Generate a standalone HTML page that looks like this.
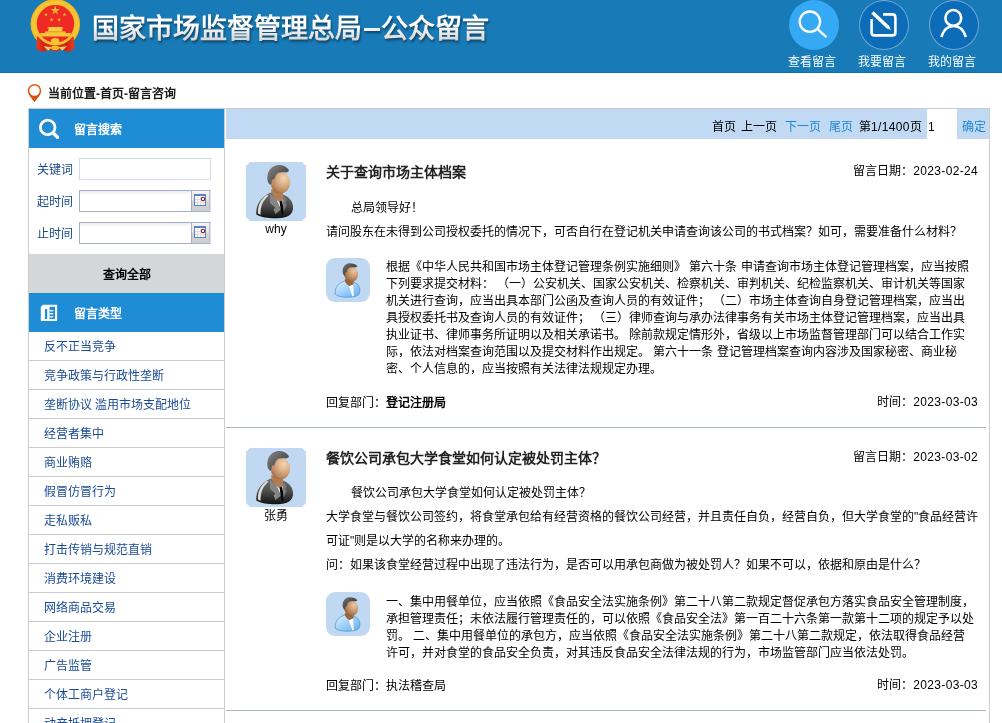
<!DOCTYPE html>
<html lang="zh-CN">
<head>
<meta charset="utf-8">
<title>公众留言</title>
<style>
*{box-sizing:border-box;margin:0;padding:0}
html,body{width:1002px;height:723px;overflow:hidden;background:#fff}
body{font-family:"Liberation Sans",sans-serif;font-size:12px;color:#000;position:relative}
.abs{position:absolute}
.t{position:absolute;white-space:nowrap;line-height:14px;height:14px}
#hdr{position:absolute;left:0;top:0;width:1002px;height:73px;background:#187ab7;border-bottom:1px solid #0a6fb6}
#title{position:absolute;left:92px;top:11.5px;font-size:27px;line-height:34px;height:34px;white-space:nowrap;font-weight:bold;letter-spacing:0;filter:drop-shadow(1px 2px 1px rgba(0,0,0,.45))}
#title span{color:#fff;background:linear-gradient(#fff 35%,#d4d4d4 90%);-webkit-background-clip:text;background-clip:text;-webkit-text-fill-color:transparent}
#title i{display:inline-block;width:16px;height:3px;margin:0 1.5px 0 1.5px;background:#f0f0f0;vertical-align:7px}
.nav{position:absolute;top:0;width:50px;height:50px;border-radius:50%;background:#0c6cb7;box-shadow:inset 0 0 0 1px rgba(255,255,255,.42)}
.nav svg{position:absolute;left:0;top:0}
.nav.on{background:#36a9f4;box-shadow:none}
.navl{position:absolute;top:55px;width:60px;text-align:center;color:#fff;font-size:12px;line-height:14px;white-space:nowrap}
#side{position:absolute;left:28px;top:108px;width:197px;height:620px;border:1px solid #ccc;border-bottom:none;background:#fff}
.sh{position:absolute;left:0;width:195px;background:#1e8dd5}
.sh .t{color:#fff;font-weight:bold;left:45px}
.lbl{color:#1a4a8a;left:8px}
.inp{position:absolute;left:50px;width:132px;height:22px;background:#fff}
.inp.cal{border:1px solid #a9aecb;border-right-color:#dfe2ee;background:linear-gradient(#e9edf5 0,#fff 4px)}
.li{position:absolute;left:0;width:195px;height:29px;border-bottom:1px solid #ccc}
.li span{position:absolute;left:15px;top:8px;line-height:14px;color:#1a4a94;white-space:nowrap}
#main{position:absolute;left:225px;top:108px;width:765px;height:620px;border-top:1px solid #ccc;border-right:1px solid #ccc}
#pg{position:absolute;left:1px;top:0;width:763px;height:30px;background:#c2d9f3}
#posts,#side,#main,#bc,#hdr{will-change:transform}
.b{font-weight:bold}
.h{font-size:14px;line-height:16px;height:16px;color:#222}
.d{letter-spacing:.33px}
.blue{color:#1f88d2}
.hr{position:absolute;left:1px;width:760px;height:1px;background:#a9b6c6}
.av{position:absolute;border-radius:8px;background:#c1d8f3;overflow:hidden}
</style>
</head>
<body>
<div id="hdr">
<svg class="abs" style="left:26px;top:0" width="60" height="56" viewBox="26 0 60 56">
<defs>
<radialGradient id="gold" cx="0.5" cy="0.5" r="0.5"><stop offset="0.72" stop-color="#e6a418"/><stop offset="0.84" stop-color="#f9d040"/><stop offset="1" stop-color="#f0b420"/></radialGradient>
<linearGradient id="gold2" x1="0" y1="0" x2="0" y2="1"><stop offset="0" stop-color="#f6cf48"/><stop offset="1" stop-color="#dca016"/></linearGradient>
<linearGradient id="drape" x1="0" y1="0" x2="1" y2="0"><stop offset="0" stop-color="#f03a22"/><stop offset="0.2" stop-color="#cf2416"/><stop offset="0.5" stop-color="#e62e1c"/><stop offset="0.8" stop-color="#cf2416"/><stop offset="1" stop-color="#f03a22"/></linearGradient>
</defs>
<circle cx="55.3" cy="24" r="24.8" fill="url(#gold)"/>
<path d="M36.9 36.8 L36.2 48.6 L40.5 51.5 L45 51.6 L48 49.4 L55.2 51.4 L62.5 49.4 L65.5 51.6 L70 51.5 L74.4 48.6 L73.7 36.8 L55 30Z" fill="url(#drape)"/>
<circle cx="55.4" cy="23.8" r="20" fill="none" stroke="#f4c230" stroke-width="2.8"/>
<circle cx="55.5" cy="23.6" r="18.7" fill="#ee2a24"/>
<polygon points="55.20,5.80 56.33,9.05 59.77,9.12 57.03,11.19 58.02,14.48 55.20,12.52 52.38,14.48 53.37,11.19 50.63,9.12 54.07,9.05" fill="url(#gold2)"/><polygon points="46.00,12.40 46.52,13.89 48.09,13.92 46.84,14.87 47.29,16.38 46.00,15.48 44.71,16.38 45.16,14.87 43.91,13.92 45.48,13.89" fill="url(#gold2)"/><polygon points="64.50,12.40 65.02,13.89 66.59,13.92 65.34,14.87 65.79,16.38 64.50,15.48 63.21,16.38 63.66,14.87 62.41,13.92 63.98,13.89" fill="url(#gold2)"/><polygon points="51.60,17.70 52.12,19.19 53.69,19.22 52.44,20.17 52.89,21.68 51.60,20.78 50.31,21.68 50.76,20.17 49.51,19.22 51.08,19.19" fill="url(#gold2)"/><polygon points="59.10,17.70 59.62,19.19 61.19,19.22 59.94,20.17 60.39,21.68 59.10,20.78 57.81,21.68 58.26,20.17 57.01,19.22 58.58,19.19" fill="url(#gold2)"/>
<path d="M48.5 27 L62.5 27 L63.5 28.6 L61.5 28.6 L62.6 31.4 L47.8 31.4 L49 28.6 L47 28.6Z" fill="#f7cc45"/>
<path d="M40 33 L70.8 33 L69.5 36.6 L41.3 36.6Z" fill="#f6c838"/>
<rect x="45" y="31.4" width="20.5" height="1.8" fill="#f2bd2e"/>
<ellipse cx="55.2" cy="40.8" rx="4.2" ry="2.9" fill="#f4c634"/>
<path d="M43.5 46.2 L52 47.2 L48.2 50.4Z M67 46.2 L58.5 47.2 L62.3 50.4Z" fill="#f7d86a"/>
<ellipse cx="55.2" cy="47.7" rx="4" ry="2.3" fill="#f2bc26"/>
</svg>
  <div id="title"><span>国家市场监督管理总局</span><i></i><span>公众留言</span></div>
  <div class="nav on" style="left:789px"><svg width="50" height="50" viewBox="789 0 50 50" fill="none" stroke="#fff" stroke-width="2.3" stroke-linecap="round"><circle cx="809.9" cy="21.7" r="10.2"/><path d="M817.6 29.2 L825.8 36.6"/></svg></div>
  <div class="nav" style="left:859px"><svg width="50" height="50" viewBox="859 0 50 50" fill="none" stroke="#fff" stroke-width="2.6" stroke-linecap="butt" stroke-linejoin="round"><path d="M883 14.4 L892.3 14.4 Q895.4 14.4 895.4 17.4 L895.4 32.4 Q895.4 35.4 892.4 35.4 L874.6 35.4 Q871.6 35.4 871.6 32.4 L871.6 19"/><path d="M873.6 11.3 L889 25.8 L890.9 30 L886.5 28.2 L871.3 13.8Z" fill="#fff" stroke="none"/></svg></div>
  <div class="nav" style="left:929px"><svg width="50" height="50" viewBox="929 0 50 50" fill="none" stroke="#fff" stroke-width="2.6" stroke-linecap="butt"><circle cx="953.3" cy="17.9" r="7.9"/><path d="M941.3 37 C943.5 30 948 26 953.6 26 C959.2 26 963.7 30 965.9 37"/></svg></div>
  <div class="navl" style="left:782px">查看留言</div>
  <div class="navl" style="left:852px">我要留言</div>
  <div class="navl" style="left:922px">我的留言</div>
</div>
<svg class="abs" style="left:26px;top:82px" width="18" height="22" viewBox="26 82 18 22"><defs><linearGradient id="pin" x1="0" y1="0" x2="0" y2="1"><stop offset="0" stop-color="#e9621f"/><stop offset="1" stop-color="#cf4a10"/></linearGradient></defs><path d="M34.5 84 C38.3 84 41.2 87 41.2 90.8 C41.2 95 37 98.5 34.5 102.3 C32 98.5 27.8 95 27.8 90.8 C27.8 87 30.7 84 34.5 84Z" fill="url(#pin)"/><circle cx="34.5" cy="90.6" r="5.2" fill="#fff"/></svg>
<div id="bc" class="t b" style="left:48px;top:87px;color:#1a1a1a">当前位置-首页-留言咨询</div>

<div id="side">
  <div class="sh" style="top:0;height:39px"><svg class="abs" style="left:8px;top:6px" width="26" height="28" viewBox="37 115 26 28" fill="none" stroke="#fff" stroke-width="2.8" stroke-linecap="round"><circle cx="47.7" cy="127.4" r="7.3"/><path d="M53.6 133.4 L57.5 137.2" stroke-width="3.4"/></svg><div class="t" style="top:14px">留言搜索</div></div>
  <div class="t lbl" style="top:54px">关键词</div>
  <div class="t lbl" style="top:86px">起时间</div>
  <div class="t lbl" style="top:118px">止时间</div>
  <div class="inp" style="top:49px;border:1px solid #d3dbe9"></div>
  <div class="inp cal" style="top:81px"><svg class="abs" style="right:0;top:0" width="20" height="20" viewBox="190 191 20 20"><defs><linearGradient id="cb" x1="0" y1="0" x2="0" y2="1"><stop offset="0" stop-color="#f6f6f6"/><stop offset="0.5" stop-color="#e4e4e4"/><stop offset="0.5" stop-color="#d2d2d2"/><stop offset="1" stop-color="#cfcfcf"/></linearGradient></defs><rect x="191" y="191" width="18" height="20" fill="url(#cb)"/><rect x="191" y="191" width="1" height="20" fill="#a9aecb"/><rect x="209" y="191" width="1" height="20" fill="#b9bdd6"/><rect x="194.5" y="194.5" width="11" height="11" fill="#fff" stroke="#5b82c4" stroke-width="1"/><rect x="194" y="194" width="12" height="2" fill="#5b82c4"/><path d="M197.5 197 V205 M200.5 197 V205 M203.5 197 V205 M195 199.5 H205 M195 202.5 H205" stroke="#d8dce6" stroke-width="1"/><circle cx="203" cy="199" r="1.7" fill="#fff" stroke="#8b1515" stroke-width="1.1"/></svg></div>
  <div class="inp cal" style="top:113px"><svg class="abs" style="right:0;top:0" width="20" height="20" viewBox="190 191 20 20"><defs><linearGradient id="cb2" x1="0" y1="0" x2="0" y2="1"><stop offset="0" stop-color="#f6f6f6"/><stop offset="0.5" stop-color="#e4e4e4"/><stop offset="0.5" stop-color="#d2d2d2"/><stop offset="1" stop-color="#cfcfcf"/></linearGradient></defs><rect x="191" y="191" width="18" height="20" fill="url(#cb2)"/><rect x="191" y="191" width="1" height="20" fill="#a9aecb"/><rect x="209" y="191" width="1" height="20" fill="#b9bdd6"/><rect x="194.5" y="194.5" width="11" height="11" fill="#fff" stroke="#5b82c4" stroke-width="1"/><rect x="194" y="194" width="12" height="2" fill="#5b82c4"/><path d="M197.5 197 V205 M200.5 197 V205 M203.5 197 V205 M195 199.5 H205 M195 202.5 H205" stroke="#d8dce6" stroke-width="1"/><circle cx="203" cy="199" r="1.7" fill="#fff" stroke="#8b1515" stroke-width="1.1"/></svg></div>
  <div class="abs" style="left:0;top:145px;width:195px;height:39px;background:#d4d7d8"><div class="t b" style="left:0;width:195px;text-align:center;top:14px">查询全部</div></div>
  <div class="sh" style="top:184px;height:39px"><svg class="abs" style="left:11px;top:11px" width="18" height="18" viewBox="40 304 18 18"><path d="M43 304.8 H57.1 V321.1 H40.8 V307Z" fill="#fff"/><rect x="45" y="309" width="2.2" height="10" fill="#1e8dd5"/><rect x="49.5" y="306.8" width="5.5" height="12.2" fill="#1e8dd5"/><rect x="49.5" y="310.1" width="3.8" height="1.3" fill="#fff"/><rect x="49.5" y="313.1" width="3.8" height="1.3" fill="#fff"/><rect x="49.5" y="316.1" width="3.8" height="1.3" fill="#fff"/></svg><div class="t" style="top:14px">留言类型</div></div>
  <div class="li" style="top:223px"><span>反不正当竞争</span></div>
  <div class="li" style="top:252px"><span>竞争政策与行政性垄断</span></div>
  <div class="li" style="top:281px"><span>垄断协议 滥用市场支配地位</span></div>
  <div class="li" style="top:310px"><span>经营者集中</span></div>
  <div class="li" style="top:339px"><span>商业贿赂</span></div>
  <div class="li" style="top:368px"><span>假冒仿冒行为</span></div>
  <div class="li" style="top:397px"><span>走私贩私</span></div>
  <div class="li" style="top:426px"><span>打击传销与规范直销</span></div>
  <div class="li" style="top:455px"><span>消费环境建设</span></div>
  <div class="li" style="top:484px"><span>网络商品交易</span></div>
  <div class="li" style="top:513px"><span>企业注册</span></div>
  <div class="li" style="top:542px"><span>广告监管</span></div>
  <div class="li" style="top:571px"><span>个体工商户登记</span></div>
  <div class="li" style="top:600px"><span>动产抵押登记</span></div>
</div>

<div id="main">
  <div id="pg">
    <div class="t" style="left:486px;top:11px">首页</div>
    <div class="t" style="left:515px;top:11px">上一页</div>
    <div class="t blue" style="left:559px;top:11px">下一页</div>
    <div class="t blue" style="left:603px;top:11px">尾页</div>
    <div class="t" style="left:633px;top:11px">第<span class="d">1/1400</span>页</div>
    <div class="abs" style="left:701px;top:0;width:30px;height:30px;background:#fff"></div>
    <div class="t" style="left:702px;top:11px">1</div>
    <div class="t blue" style="left:736px;top:11px">确定</div>
  </div>
</div>

<svg width="0" height="0" style="position:absolute">
<defs>
<radialGradient id="skin" cx="0.68" cy="0.3" r="0.8"><stop offset="0" stop-color="#f3d5b4"/><stop offset="0.4" stop-color="#ddb088"/><stop offset="0.75" stop-color="#bb8a60"/><stop offset="1" stop-color="#96663f"/></radialGradient>
<linearGradient id="hair" x1="0" y1="0" x2="1" y2="1"><stop offset="0" stop-color="#8a8a8a"/><stop offset="0.5" stop-color="#5a5a5a"/><stop offset="1" stop-color="#3a3a3a"/></linearGradient>
<linearGradient id="suit" x1="0" y1="0" x2="0" y2="1"><stop offset="0" stop-color="#707070"/><stop offset="0.55" stop-color="#484848"/><stop offset="1" stop-color="#111"/></linearGradient>
<linearGradient id="shirt" x1="0" y1="0" x2="1" y2="1"><stop offset="0" stop-color="#e4f2fd"/><stop offset="0.45" stop-color="#a6d3fa"/><stop offset="1" stop-color="#5fadf2"/></linearGradient>
<radialGradient id="skin2" cx="0.7" cy="0.28" r="0.85"><stop offset="0" stop-color="#ecc9a5"/><stop offset="0.4" stop-color="#cf9e74"/><stop offset="0.75" stop-color="#a87649"/><stop offset="1" stop-color="#80512c"/></radialGradient>
<linearGradient id="hair2" x1="0" y1="0" x2="1" y2="1"><stop offset="0" stop-color="#7a7a7a"/><stop offset="0.5" stop-color="#484848"/><stop offset="1" stop-color="#2e2e2e"/></linearGradient>
</defs>
</svg>
<div id="posts">
<div class="av" style="left:246px;top:162px;width:60px;height:59px;border-radius:2px;clip-path:polygon(4px 0,56px 0,60px 4px,60px 55px,56px 59px,4px 59px,0 55px,0 4px)"><svg width="60" height="59" viewBox="0 0 60 59"><path d="M10.3 52.5 C9.8 43 14 36 24.5 30.6 L37.6 32.7 C43.5 35 47.5 40 47 47 C46.5 51 44 53.5 40 55 C33 57 18 57 10.3 52.5Z" fill="url(#suit)"/>
  <path d="M12 51.5 C11.5 44 14.5 37.5 20.6 33 L22.6 33.6 C17 38.5 14.2 44.5 14.6 52.8Z" fill="#dcdcdc"/>
  <path d="M25.3 27 L37 29 L37.2 37 L33.5 41 L29.5 38 L25.3 31Z" fill="#b17d52"/>
  <path d="M30.2 37.4 L33.6 40.5 L36.6 37.6 L38 44 L35 47.5Z" fill="#f6f6f6"/>
  <path d="M33.6 39.4 L36 38.5 L38.1 49 L36.4 54 L34.8 49.2Z" fill="#080808"/>
  <path d="M24 31.5 L30.4 37.6 L34.6 47.8 L29.5 52 L27.5 47.5 L29.2 45.6 L24 41Z" fill="#858585"/>
  <path d="M38 34 L40.5 38.5 L39 41.5 L40.8 42.5 L37.6 50 L36.6 38Z" fill="#7b7b7b"/>
  <ellipse cx="34.4" cy="20.6" rx="9.7" ry="10.9" fill="url(#skin)"/>
  <ellipse cx="26.2" cy="20" rx="1.9" ry="3" fill="#c08c62"/>
  <path d="M24.6 23 C22 21.5 20.6 17.5 21.6 13 C23 6.5 28 3.1 32.7 3.1 C37 3.1 41 5 43 8.3 C42.5 10.2 41 10.6 38.5 10.3 C34.5 9.8 31.4 10.4 30.3 12.5 C29.2 14.5 28.6 16.4 28.2 17.4 C26.6 16.6 25.4 18 25.6 19.8 C25.7 21 25.3 22.2 24.6 23Z" fill="url(#hair)"/></svg></div>
<div class="t " style="left:246px;top:222px;width:60px;text-align:center;">why</div>
<div class="t b h" style="left:326px;top:164px;">关于查询市场主体档案</div>
<div class="t " style="left:778px;top:164px;width:200px;text-align:right;">留言日期：<span class="d">2023-02-24</span></div>
<div class="t " style="left:351px;top:201px;">总局领导好！</div>
<div class="t " style="left:326px;top:225px;">请问股东在未得到公司授权委托的情况下，可否自行在登记机关申请查询该公司的书式档案？如可，需要准备什么材料？</div>
<div class="av" style="left:326px;top:258px;width:44px;height:44px;border-radius:9px"><svg width="44" height="44" viewBox="0 0 44 44"><path d="M9.2 36.3 C8.8 29.5 12 25.5 18.3 23.1 L28.6 24.3 C32 26 34.2 29.5 33.8 33 C33.6 35 33.2 36 32.6 36.8 C28.5 40 14 40.3 9.2 36.3Z" fill="url(#shirt)" stroke="#4b8fd0" stroke-width="0.7"/>
  <path d="M18.9 21 L27.6 22.5 L27.4 26.6 L24.4 28.8 L21 26.5 L18.9 23.5Z" fill="#9a653c"/>
  <path d="M22.8 28.3 L27.1 26.6 L27.8 37.8 L26.4 38.4Z" fill="#fbfbfb"/>
  <ellipse cx="25.2" cy="16.5" rx="6.9" ry="7.6" fill="url(#skin2)"/>
  <path d="M18.6 18 C16.8 16.5 16 13 17 10.2 C18.3 6.8 21 5.2 23.7 5.2 C27 5.2 30 6.4 31.4 8.3 C30.6 9.4 29.5 9.5 27.6 9.3 C24.8 9 22.6 9.5 21.8 11 C21 12.5 20.8 13.5 20.5 14.3 C19.6 14 18.8 14.8 19 16 C19.1 16.8 18.9 17.5 18.6 18Z" fill="url(#hair2)"/></svg></div>
<div class="t " style="left:386px;top:260px;">根据《中华人民共和国市场主体登记管理条例实施细则》 第六十条 申请查询市场主体登记管理档案，应当按照</div>
<div class="t " style="left:386px;top:277px;">下列要求提交材料： （一）公安机关、国家公安机关、检察机关、审判机关、纪检监察机关、审计机关等国家</div>
<div class="t " style="left:386px;top:294px;">机关进行查询，应当出具本部门公函及查询人员的有效证件； （二）市场主体查询自身登记管理档案，应当出</div>
<div class="t " style="left:386px;top:311px;">具授权委托书及查询人员的有效证件； （三）律师查询与承办法律事务有关市场主体登记管理档案，应当出具</div>
<div class="t " style="left:386px;top:328px;">执业证书、律师事务所证明以及相关承诺书。 除前款规定情形外，省级以上市场监督管理部门可以结合工作实</div>
<div class="t " style="left:386px;top:345px;">际，依法对档案查询范围以及提交材料作出规定。 第六十一条 登记管理档案查询内容涉及国家秘密、商业秘</div>
<div class="t " style="left:386px;top:362px;">密、个人信息的，应当按照有关法律法规规定办理。</div>
<div class="t " style="left:326px;top:396px;">回复部门：<b>登记注册局</b></div>
<div class="t " style="left:778px;top:395px;width:200px;text-align:right;">时间：<span class="d">2023-03-03</span></div>
<div class="hr" style="left:226px;top:427px"></div>
<div class="av" style="left:246px;top:448px;width:60px;height:59px;border-radius:2px;clip-path:polygon(4px 0,56px 0,60px 4px,60px 55px,56px 59px,4px 59px,0 55px,0 4px)"><svg width="60" height="59" viewBox="0 0 60 59"><path d="M10.3 52.5 C9.8 43 14 36 24.5 30.6 L37.6 32.7 C43.5 35 47.5 40 47 47 C46.5 51 44 53.5 40 55 C33 57 18 57 10.3 52.5Z" fill="url(#suit)"/>
  <path d="M12 51.5 C11.5 44 14.5 37.5 20.6 33 L22.6 33.6 C17 38.5 14.2 44.5 14.6 52.8Z" fill="#dcdcdc"/>
  <path d="M25.3 27 L37 29 L37.2 37 L33.5 41 L29.5 38 L25.3 31Z" fill="#b17d52"/>
  <path d="M30.2 37.4 L33.6 40.5 L36.6 37.6 L38 44 L35 47.5Z" fill="#f6f6f6"/>
  <path d="M33.6 39.4 L36 38.5 L38.1 49 L36.4 54 L34.8 49.2Z" fill="#080808"/>
  <path d="M24 31.5 L30.4 37.6 L34.6 47.8 L29.5 52 L27.5 47.5 L29.2 45.6 L24 41Z" fill="#858585"/>
  <path d="M38 34 L40.5 38.5 L39 41.5 L40.8 42.5 L37.6 50 L36.6 38Z" fill="#7b7b7b"/>
  <ellipse cx="34.4" cy="20.6" rx="9.7" ry="10.9" fill="url(#skin)"/>
  <ellipse cx="26.2" cy="20" rx="1.9" ry="3" fill="#c08c62"/>
  <path d="M24.6 23 C22 21.5 20.6 17.5 21.6 13 C23 6.5 28 3.1 32.7 3.1 C37 3.1 41 5 43 8.3 C42.5 10.2 41 10.6 38.5 10.3 C34.5 9.8 31.4 10.4 30.3 12.5 C29.2 14.5 28.6 16.4 28.2 17.4 C26.6 16.6 25.4 18 25.6 19.8 C25.7 21 25.3 22.2 24.6 23Z" fill="url(#hair)"/></svg></div>
<div class="t " style="left:246px;top:509px;width:60px;text-align:center;">张勇</div>
<div class="t b h" style="left:326px;top:450px;">餐饮公司承包大学食堂如何认定被处罚主体？</div>
<div class="t " style="left:778px;top:450px;width:200px;text-align:right;">留言日期：<span class="d">2023-03-02</span></div>
<div class="t " style="left:351px;top:486px;">餐饮公司承包大学食堂如何认定被处罚主体？</div>
<div class="t " style="left:326px;top:510px;">大学食堂与餐饮公司签约，将食堂承包给有经营资格的餐饮公司经营，并且责任自负，经营自负，但大学食堂的"食品经营许</div>
<div class="t " style="left:326px;top:534px;">可证"则是以大学的名称来办理的。</div>
<div class="t " style="left:326px;top:558px;">问：如果该食堂经营过程中出现了违法行为，是否可以用承包商做为被处罚人？如果不可以，依据和原由是什么？</div>
<div class="av" style="left:326px;top:592px;width:44px;height:44px;border-radius:9px"><svg width="44" height="44" viewBox="0 0 44 44"><path d="M9.2 36.3 C8.8 29.5 12 25.5 18.3 23.1 L28.6 24.3 C32 26 34.2 29.5 33.8 33 C33.6 35 33.2 36 32.6 36.8 C28.5 40 14 40.3 9.2 36.3Z" fill="url(#shirt)" stroke="#4b8fd0" stroke-width="0.7"/>
  <path d="M18.9 21 L27.6 22.5 L27.4 26.6 L24.4 28.8 L21 26.5 L18.9 23.5Z" fill="#9a653c"/>
  <path d="M22.8 28.3 L27.1 26.6 L27.8 37.8 L26.4 38.4Z" fill="#fbfbfb"/>
  <ellipse cx="25.2" cy="16.5" rx="6.9" ry="7.6" fill="url(#skin2)"/>
  <path d="M18.6 18 C16.8 16.5 16 13 17 10.2 C18.3 6.8 21 5.2 23.7 5.2 C27 5.2 30 6.4 31.4 8.3 C30.6 9.4 29.5 9.5 27.6 9.3 C24.8 9 22.6 9.5 21.8 11 C21 12.5 20.8 13.5 20.5 14.3 C19.6 14 18.8 14.8 19 16 C19.1 16.8 18.9 17.5 18.6 18Z" fill="url(#hair2)"/></svg></div>
<div class="t " style="left:386px;top:595px;">一、集中用餐单位，应当依照《食品安全法实施条例》第二十八第二款规定督促承包方落实食品安全管理制度，</div>
<div class="t " style="left:386px;top:612px;">承担管理责任；未依法履行管理责任的，可以依照《食品安全法》第一百二十六条第一款第十二项的规定予以处</div>
<div class="t " style="left:386px;top:629px;">罚。 二、集中用餐单位的承包方，应当依照《食品安全法实施条例》第二十八第二款规定，依法取得食品经营</div>
<div class="t " style="left:386px;top:646px;">许可，并对食堂的食品安全负责，对其违反食品安全法律法规的行为，市场监管部门应当依法处罚。</div>
<div class="t " style="left:326px;top:679px;">回复部门：执法稽查局</div>
<div class="t " style="left:778px;top:678px;width:200px;text-align:right;">时间：<span class="d">2023-03-03</span></div>
<div class="hr" style="left:226px;top:710px"></div>
</div>
</body>
</html>
